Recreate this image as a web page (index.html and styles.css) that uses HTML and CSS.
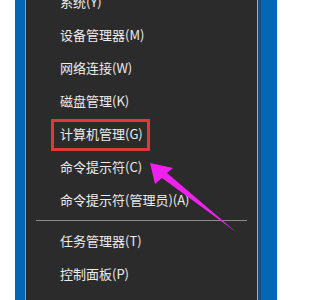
FILE: index.html
```html
<!DOCTYPE html>
<html lang="zh-CN">
<head>
<meta charset="utf-8">
<link rel="stylesheet" href="styles.css">
</head>
<body>
<div class="screen">
  <div class="gap-left"></div>
  <div class="accent-left"></div>
  <div class="edge-left"></div>
  <div class="menu">
    <ul class="items">
      <li class="item">系统(Y)</li>
      <li class="item">设备管理器(M)</li>
      <li class="item">网络连接(W)</li>
      <li class="item">磁盘管理(K)</li>
      <li class="item">计算机管理(G)</li>
      <li class="item">命令提示符(C)</li>
      <li class="item">命令提示符(管理员)(A)</li>
      <li class="divider"></li>
      <li class="item">任务管理器(T)</li>
      <li class="item">控制面板(P)</li>
      <li class="item">文件资源管理器(E)</li>
    </ul>
  </div>
  <div class="edge-right"></div>
  <div class="shadow-right"></div>
  <div class="accent-right"></div>
  <div class="gap-right"></div>

  <div class="highlight"></div>
  <svg class="arrow" width="300" height="300" viewBox="0 0 300 300">
    <polygon points="150,163 173,168 167,173 236,232 162,178 155,184" fill="#ee22ee"/>
  </svg>
</div>
</body>
</html>
```
FILE: styles.css
```css
html, body {
  margin: 0;
  padding: 0;
  background: #ffffff;
}
.screen {
  position: relative;
  width: 300px;
  height: 300px;
  overflow: hidden;
  display: flex;
  flex-direction: row;
}
.gap-left { width: 15px; background: #ffffff; }
.accent-left { width: 10px; background: #0467b5; }
.edge-left { width: 1px; background: #7f9cb8; }
.menu {
  width: 231px;
  background: #2b2b2b;
  overflow: hidden;
}
.items {
  list-style: none;
  margin: -15px 0 0 0;
  padding: 0;
}
.item {
  height: 33px;
  line-height: 33px;
  padding-left: 34px;
  font-family: "Noto Sans CJK SC", "Microsoft YaHei", sans-serif;
  font-size: 13px;
  color: #ececec;
  white-space: nowrap;
}
.divider {
  height: 1px;
  margin: 4px 10px 3px 10px;
  background: #8a8a8a;
}
.edge-right { width: 1px; background: #a8acb0; }
.shadow-right { width: 3px; background: #174f84; }
.accent-right { width: 16px; background: #0467b5; }
.gap-right { flex: 1; background: #ffffff; }

.highlight {
  position: absolute;
  left: 51px;
  top: 119px;
  width: 93px;
  height: 26px;
  border: 3px solid #e0393b;
}
.arrow {
  position: absolute;
  left: 0;
  top: 0;
}
```
